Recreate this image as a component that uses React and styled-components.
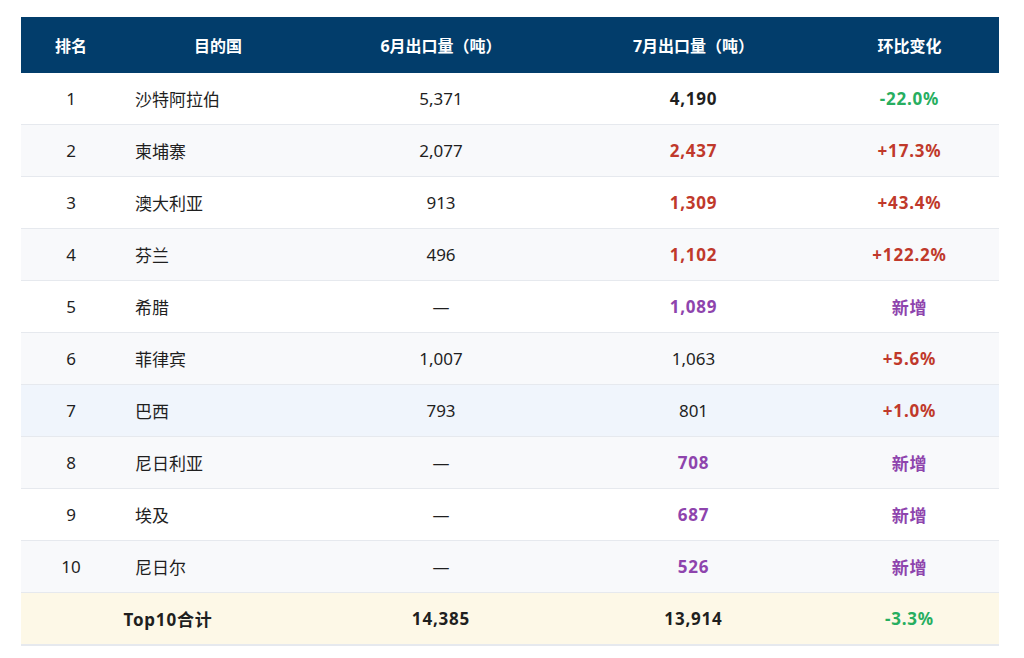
import React from "react";
import styled, { createGlobalStyle } from "styled-components";

const GlobalStyle = createGlobalStyle`
  html, body { margin: 0; padding: 0; background: #ffffff; }
  body { font-family: "Noto Sans", "Noto Sans CJK SC", sans-serif; }
`;

const Page = styled.div`
  padding: 17px 25px 0 21px;
`;

const Table = styled.table`
  width: 978px;
  border-collapse: collapse;
  table-layout: fixed;
  font-family: "Noto Sans", "Noto Sans CJK SC", sans-serif;
`;

const HeadCell = styled.th`
  height: 56px;
  padding: 0;
  background: #023d6b;
  color: #ffffff;
  font-size: 16px;
  font-weight: 700;
  text-align: center;
`;

const Row = styled.tr`
  background: ${(p) => (p.$highlight ? "#f0f5fc" : p.$even ? "#f8f9fb" : "#ffffff")};
  border-bottom: 1px solid #e6e9ee;
`;

const TotalRow = styled.tr`
  background: #fdf8e7;
  border-bottom: 2px solid #e6e9ee;
`;

const Cell = styled.td`
  height: 51px;
  padding: 0 ${(p) => (p.$left ? "14px" : "0")};
  font-size: 17px;
  color: ${(p) => p.$color || "#1f1f1f"};
  font-weight: ${(p) => (p.$bold ? 700 : 400)};
  letter-spacing: ${(p) => (p.$bold ? "0.8px" : "0")};
  text-align: ${(p) => (p.$left ? "left" : "center")};
  white-space: nowrap;
`;

const COLORS = {
  up: "#c0392b",
  down: "#27ae60",
  new: "#8e44ad",
};

const rows = [
  { rank: 1, name: "沙特阿拉伯", jun: "5,371", jul: "4,190", julTone: "plain", chg: "-22.0%", tone: "down" },
  { rank: 2, name: "柬埔寨", jun: "2,077", jul: "2,437", julTone: "up", chg: "+17.3%", tone: "up" },
  { rank: 3, name: "澳大利亚", jun: "913", jul: "1,309", julTone: "up", chg: "+43.4%", tone: "up" },
  { rank: 4, name: "芬兰", jun: "496", jul: "1,102", julTone: "up", chg: "+122.2%", tone: "up" },
  { rank: 5, name: "希腊", jun: "—", jul: "1,089", julTone: "new", chg: "新增", tone: "new" },
  { rank: 6, name: "菲律宾", jun: "1,007", jul: "1,063", julTone: "none", chg: "+5.6%", tone: "up" },
  { rank: 7, name: "巴西", jun: "793", jul: "801", julTone: "none", chg: "+1.0%", tone: "up", highlight: true },
  { rank: 8, name: "尼日利亚", jun: "—", jul: "708", julTone: "new", chg: "新增", tone: "new" },
  { rank: 9, name: "埃及", jun: "—", jul: "687", julTone: "new", chg: "新增", tone: "new" },
  { rank: 10, name: "尼日尔", jun: "—", jul: "526", julTone: "new", chg: "新增", tone: "new" },
];

export default function App() {
  return (
    <>
      <GlobalStyle />
      <Page>
        <Table>
          <colgroup>
            <col style={{ width: "100px" }} />
            <col style={{ width: "194px" }} />
            <col style={{ width: "252px" }} />
            <col style={{ width: "253px" }} />
            <col style={{ width: "179px" }} />
          </colgroup>
          <thead>
            <tr>
              <HeadCell>排名</HeadCell>
              <HeadCell>目的国</HeadCell>
              <HeadCell>6月出口量（吨）</HeadCell>
              <HeadCell>7月出口量（吨）</HeadCell>
              <HeadCell>环比变化</HeadCell>
            </tr>
          </thead>
          <tbody>
            {rows.map((r, i) => (
              <Row key={r.rank} $even={i % 2 === 1} $highlight={r.highlight}>
                <Cell>{r.rank}</Cell>
                <Cell $left>{r.name}</Cell>
                <Cell>{r.jun}</Cell>
                <Cell
                  $bold={r.julTone !== "none"}
                  $color={COLORS[r.julTone]}
                >
                  {r.jul}
                </Cell>
                <Cell $bold $color={COLORS[r.tone]}>
                  {r.chg}
                </Cell>
              </Row>
            ))}
            <TotalRow>
              <Cell colSpan={2} $bold>Top10合计</Cell>
              <Cell $bold>14,385</Cell>
              <Cell $bold>13,914</Cell>
              <Cell $bold $color={COLORS.down}>-3.3%</Cell>
            </TotalRow>
          </tbody>
        </Table>
      </Page>
    </>
  );
}
